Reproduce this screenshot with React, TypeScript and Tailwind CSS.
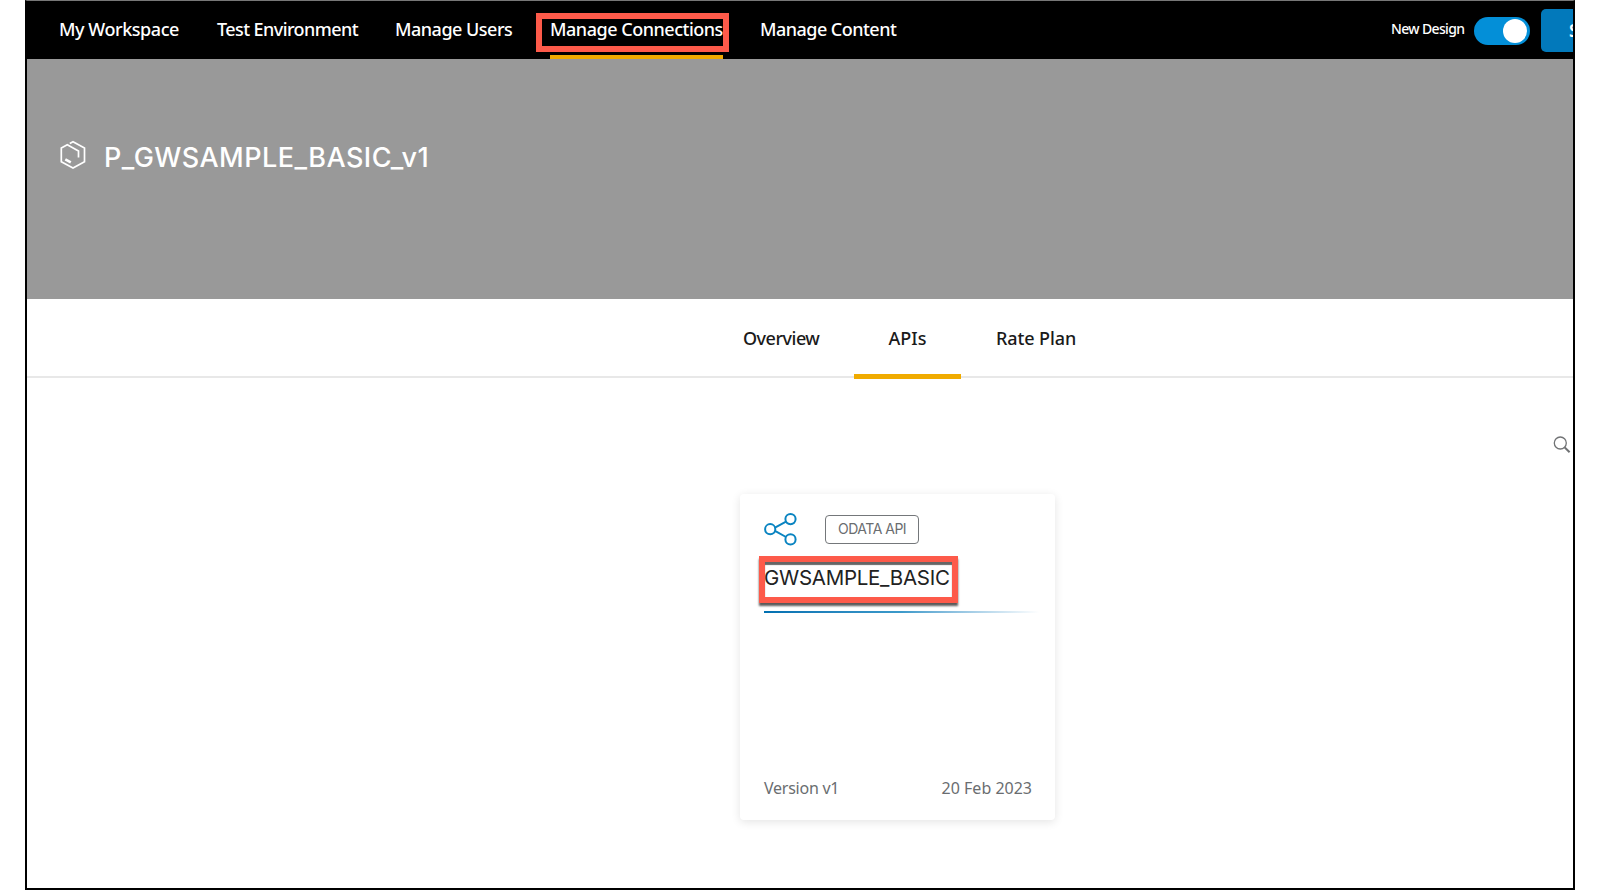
const navItem = 'shrink-0 whitespace-nowrap text-[18px] font-medium leading-[56px]';

function Nav() {
  return (
    <header className="relative flex h-[58px] shrink-0 bg-black text-white">
      <nav className="flex pl-8">
        <span className={`${navItem} w-[158px] tracking-[-0.45px]`}>My Workspace</span>
        <span className={`${navItem} w-[178px] tracking-[-0.58px]`}>Test Environment</span>
        <span className={`${navItem} w-[155px] tracking-[-0.5px]`}>Manage Users</span>
        <span className={`${navItem} relative w-[210px] tracking-[-0.48px]`}>
          Manage Connections
          <span className="absolute bottom-0 left-0 h-1 w-[173px] bg-[#f0ab00]" />
          <span className="absolute -left-[14px] top-[12px] h-[39px] w-[193px] border-[6px] border-[#fd5a4a]" />
        </span>
        <span className={`${navItem} tracking-[-0.53px]`}>Manage Content</span>
      </nav>
      <div className="ml-auto flex items-center">
        <span className="mr-[9px] w-[74px] whitespace-nowrap text-[14px] font-medium leading-[52px] tracking-[-0.65px]">
          <span className="relative -top-px">New Design</span>
        </span>
        <span className="mt-[2px] flex h-7 w-14 items-center justify-end rounded-full bg-[#038fd8] pr-[3px]">
          <span className="size-6 rounded-full bg-white" />
        </span>
        <span className="ml-[11px] mt-px h-[43px] w-8 overflow-hidden rounded-l-[5px] bg-[#0279bb] pl-[28px] text-[17px] font-semibold leading-[43px]">
          S
        </span>
      </div>
    </header>
  );
}

function ShareIcon() {
  return (
    <svg className="size-[33px]" viewBox="0 0 33 33" fill="none" stroke="#0a84c1" strokeWidth="2">
      <circle cx="6.2" cy="16.2" r="5.1" />
      <circle cx="26.5" cy="6.1" r="5.1" />
      <circle cx="26.5" cy="26.4" r="5.1" />
      <path d="M11 14.6 22 8.6M11 17.8 22 24" />
    </svg>
  );
}

function Card() {
  return (
    <article className="ml-[713px] mt-[39px] flex h-[326px] w-[315px] flex-col rounded bg-white pl-6 shadow-[0_2px_10px_rgba(0,0,0,0.11)]">
      <div className="mt-[18px] flex h-[34px] items-center">
        <ShareIcon />
        <span className="ml-[28px] mt-[1px] h-[29px] w-[94px] whitespace-nowrap rounded border border-[#74777a] pl-3 font-['Inter',sans-serif] text-[14px] leading-[26px] tracking-[-0.5px] text-[#6a6d70]">
          ODATA API
        </span>
      </div>
      <div className="relative mt-[10px] h-[48px]">
        <h2 className="whitespace-nowrap font-['Inter',sans-serif] text-[20.5px] leading-[43px] tracking-[-0.28px] text-[#222]">
          GWSAMPLE_BASIC
        </h2>
        <span className="absolute -left-[5px] top-0 h-[47px] w-[199px] border-[6px] border-[#fd5a4a] shadow-[0_3px_2px_rgba(0,0,0,0.65),inset_0_3px_1px_rgba(0,0,0,0.6)]" />
      </div>
      <div className="mt-[7px] h-[2px] w-[275px] bg-linear-to-r from-[#0070b1] via-[#3c9aca] to-white" />
      <div className="mt-auto flex justify-between pb-[20px] pr-[23px] text-[16px] leading-6 text-[#6a6d70]">
        <span className="tracking-[-0.25px]">Version v1</span>
        <span>20 Feb 2023</span>
      </div>
    </article>
  );
}

export default function App() {
  return (
    <div className="h-[890px] w-[1600px] overflow-hidden bg-white pl-[25px] font-['Noto_Sans',sans-serif]">
      <div className="flex h-[890px] w-[1550px] flex-col border-x-2 border-b-2 border-t border-black border-t-[#777]">
        <Nav />
        <section className="flex h-[240px] shrink-0 bg-[#999] pl-[33px] pt-[80px] text-white">
          <svg className="mt-[1px] h-[30px] w-[26px]" viewBox="0 0 26 30" fill="none" stroke="white" strokeWidth="1.7">
            <path d="M9.8 3.4 13 1.8 24.5 8V21.8L13 28 1.3 21.8V8L7.3 4.8 18.5 11V17.5" />
            <path d="m5.3 19.4 5.5 3" strokeWidth="2.6" />
          </svg>
          <h1 className="ml-[18px] h-10 whitespace-nowrap font-['Inter',sans-serif] text-[27px] font-medium leading-[37px] tracking-[0.45px]">
            P_GWSAMPLE_BASIC_v1
          </h1>
        </section>
        <div className="relative flex h-[79px] shrink-0 border-b-2 border-[#e8e8e8] pl-[716px] text-[18px] font-medium leading-[78px] text-[#1a1a1a]">
          <span className="w-[111px] tracking-[-0.5px]">Overview</span>
          <span className="flex w-[107px] justify-center">
            <span>APIs</span>
            <span className="absolute -bottom-[3px] h-[5px] w-[107px] bg-[#f0ab00]" />
          </span>
          <span className="pl-[35px] tracking-[-0.1px]">Rate Plan</span>
        </div>
        <div className="mt-[57px] flex h-5 justify-end pr-[2px]">
          <svg className="h-[19px] w-[18px]" viewBox="0 0 18 19" fill="none" stroke="#707274" strokeWidth="1.3">
            <circle cx="7.3" cy="8" r="6" />
            <path d="m11.8 12.5 4.8 4.8" strokeWidth="2" />
          </svg>
        </div>
        <Card />
      </div>
    </div>
  );
}
